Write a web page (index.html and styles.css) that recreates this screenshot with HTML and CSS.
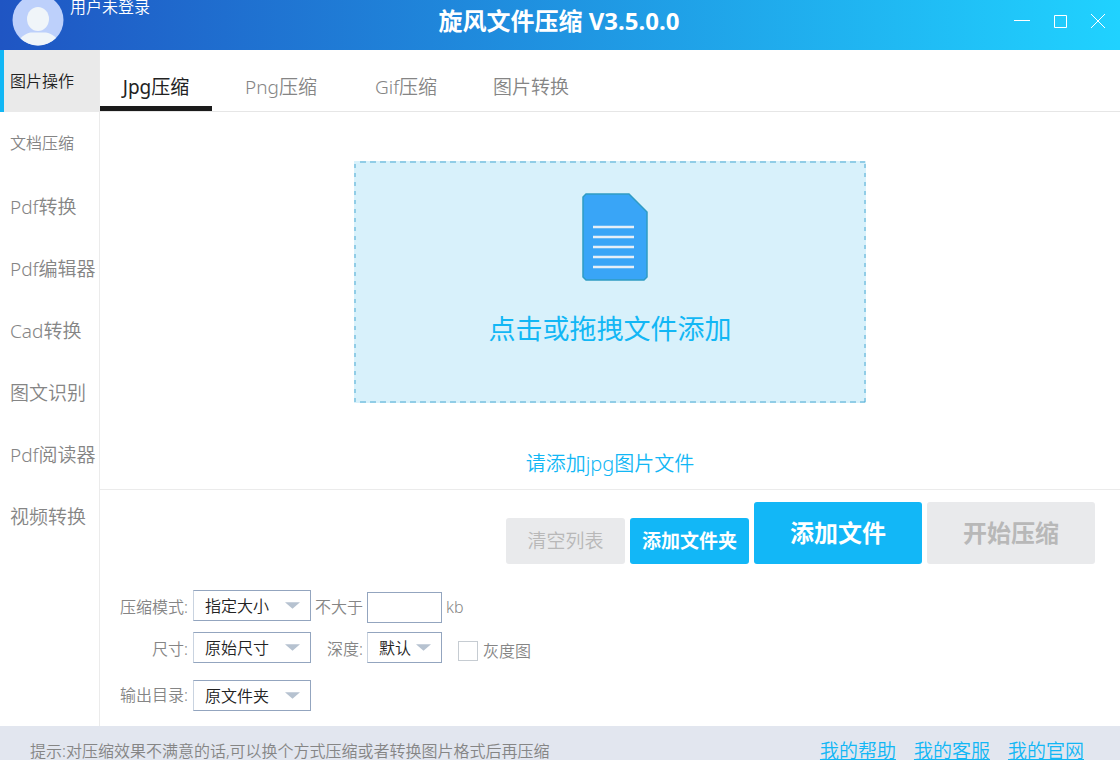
FILE: index.html
```
<!DOCTYPE html>
<html lang="zh-CN">
<head>
<meta charset="utf-8">
<title>旋风文件压缩</title>
<link rel="stylesheet" href="styles.css">
</head>
<body>
<div class="app">
  <header class="titlebar">
    <div class="user">
      <svg class="avatar" viewBox="0 0 52 52" aria-hidden="true">
        <defs><clipPath id="disc"><circle cx="26" cy="26" r="25.5"/></clipPath></defs>
        <circle cx="26" cy="26" r="25.5" fill="#bdd0fb"/>
        <g clip-path="url(#disc)" fill="#f0f5f9">
          <ellipse cx="26" cy="25" rx="11" ry="12"/>
          <path d="M7 46 C12 40 17 38.500 20 38.500 H32 C36 38.500 41 40 46 46 V54 H7 Z"/>
        </g>
      </svg>
      <span class="user-name">用户未登录</span>
    </div>
    <h1 class="title">旋风文件压缩 V3.5.0.0</h1>
    <div class="window-controls">
      <button type="button" class="window-button" aria-label="最小化"><svg viewBox="0 0 16 16"><path d="M0 7.500H16"/></svg></button>
      <button type="button" class="window-button" aria-label="最大化"><svg viewBox="0 0 16 16"><path d="M2.500 2.500H14.500V14.500H2.500Z"/></svg></button>
      <button type="button" class="window-button" aria-label="关闭"><svg viewBox="0 0 16 16"><path d="M1 1L15 15M15 1L1 15"/></svg></button>
    </div>
  </header>

  <div class="body">
    <nav class="sidebar">
      <button type="button" class="side-item side-item-small side-item-active">图片操作</button>
      <button type="button" class="side-item side-item-small">文档压缩</button>
      <button type="button" class="side-item">Pdf转换</button>
      <button type="button" class="side-item">Pdf编辑器</button>
      <button type="button" class="side-item">Cad转换</button>
      <button type="button" class="side-item">图文识别</button>
      <button type="button" class="side-item">Pdf阅读器</button>
      <button type="button" class="side-item">视频转换</button>
    </nav>

    <main class="main">
      <div class="tabs">
        <button type="button" class="tab tab-active">Jpg压缩</button>
        <button type="button" class="tab">Png压缩</button>
        <button type="button" class="tab">Gif压缩</button>
        <button type="button" class="tab">图片转换</button>
      </div>

      <section class="files">
        <button type="button" class="dropzone">
          <svg class="dropzone-frame" aria-hidden="true">
            <g class="dash-row"><line x1="6" y1="1" x2="100%" y2="1"/><line x1="6" y1="100%" x2="100%" y2="100%"/></g>
            <g class="dash-column"><line x1="1" y1="3" x2="1" y2="100%"/><line x1="100%" y1="3" x2="100%" y2="100%"/></g>
          </svg>
          <svg class="file-icon" viewBox="0 0 66 88" aria-hidden="true">
            <path d="M4 1H47L65 19V84L62 87H4L1 84V4Z" fill="#39a5f7" stroke="#2f9cc4" stroke-width="1.500"/>
            <path d="M11 34H52M11 44H52M11 54H52M11 64H52M11 74H52" stroke="#e6eff7" stroke-width="2.500" fill="none"/>
          </svg>
          <span class="dropzone-text">点击或拖拽文件添加</span>
        </button>
        <p class="hint">请添加jpg图片文件</p>
      </section>

      <section class="controls">
        <div class="actions">
          <button type="button" class="action action-muted">清空列表</button>
          <button type="button" class="action action-primary">添加文件夹</button>
          <button type="button" class="action action-large action-primary">添加文件</button>
          <button type="button" class="action action-large action-muted">开始压缩</button>
        </div>
        <form class="options">
          <div class="row">
            <label class="label" for="mode">压缩模式:</label>
            <span class="select"><select id="mode"><option>指定大小</option></select><svg viewBox="0 0 16 8" aria-hidden="true"><path d="M0 0H16L8 7Z"/></svg></span>
            <label class="label label-second" for="limit">不大于</label>
            <input class="limit" id="limit" type="text">
            <label class="unit" for="limit">kb</label>
          </div>
          <div class="row">
            <label class="label" for="size">尺寸:</label>
            <span class="select"><select id="size"><option>原始尺寸</option></select><svg viewBox="0 0 16 8" aria-hidden="true"><path d="M0 0H16L8 7Z"/></svg></span>
            <label class="label label-second" for="depth">深度:</label>
            <span class="select select-short"><select id="depth"><option>默认</option></select><svg viewBox="0 0 16 8" aria-hidden="true"><path d="M0 0H16L8 7Z"/></svg></span>
            <label class="gray"><input type="checkbox" class="checkbox">灰度图</label>
          </div>
          <div class="row row-output">
            <label class="label" for="output">输出目录:</label>
            <span class="select"><select id="output"><option>原文件夹</option></select><svg viewBox="0 0 16 8" aria-hidden="true"><path d="M0 0H16L8 7Z"/></svg></span>
          </div>
        </form>
      </section>
    </main>
  </div>

  <footer class="footer">
    <span class="tip">提示:对压缩效果不满意的话,可以换个方式压缩或者转换图片格式后再压缩</span>
    <div class="links">
      <a href="#help">我的帮助</a>
      <a href="#service">我的客服</a>
      <a href="#site">我的官网</a>
    </div>
  </footer>
</div>
</body>
</html>
```
FILE: styles.css
```
* {
  box-sizing: border-box;
}

body {
  margin: 0;
  font-family: "Noto Sans", "Noto Sans CJK SC", sans-serif;
  font-size: 16px;
  font-weight: 350;
  line-height: 24px;
  color: #858585;
  background: #fff;
}

button,
input,
select {
  margin: 0;
  padding: 0;
  border: 0;
  border-radius: 0;
  background: none;
  font: inherit;
  color: inherit;
}

.app {
  display: flex;
  flex-direction: column;
  height: 100vh;
  overflow: hidden;
}

/* Title bar */

.titlebar {
  display: grid;
  grid-template-columns: 1fr auto 1fr;
  flex: none;
  height: 50px;
  padding: 0 14px 0 12px;
  color: #fff;
  background: linear-gradient(90deg, #1f55c3, #20d2ff);
}

.user {
  display: flex;
  align-items: flex-start;
  gap: 6px;
}

.user-name {
  line-height: 14px;
}

.avatar {
  flex: none;
  width: 52px;
  height: 52px;
  margin-top: -6px;
}

.title {
  margin: 0;
  font-size: 24px;
  font-weight: 700;
  line-height: 42px;
}

.window-controls {
  display: flex;
  justify-content: flex-end;
  gap: 22px;
  height: 42px;
}

.window-button svg {
  display: block;
  width: 16px;
  height: 16px;
  fill: none;
  stroke: #fff;
  stroke-width: 1;
}

/* Body */

.body {
  display: flex;
  flex: 1;
  min-height: 0;
}

.sidebar {
  display: flex;
  flex-direction: column;
  flex: none;
  width: 100px;
  border-right: 1px solid #ebebeb;
}

.side-item {
  flex: none;
  height: 62px;
  padding: 3px 0 0 10px;
  font-size: 19px;
  text-align: left;
  white-space: nowrap;
}

.side-item-small {
  padding-top: 0;
  font-size: 16px;
}

.side-item-active {
  padding-left: 6px;
  border-left: 4px solid #12b7f5;
  background: #eaeaea;
  color: #222;
}

.main {
  display: flex;
  flex-direction: column;
  flex: 1;
  min-width: 0;
}

.tabs {
  display: flex;
  gap: 13px;
  flex: none;
  height: 62px;
  border-bottom: 1px solid #e6e6e6;
}

.tab {
  width: 112px;
  padding-top: 17px;
  border-bottom: 5px solid transparent;
  font-size: 19px;
}

.tab-active {
  border-bottom-color: #1b1b1b;
  font-weight: 400;
  color: #222;
}

.files {
  display: flex;
  flex-direction: column;
  align-items: center;
  flex: 1;
  padding-top: 49px;
  border-bottom: 1px solid #ebebeb;
}

.dropzone {
  position: relative;
  display: flex;
  flex-direction: column;
  align-items: center;
  gap: 28px;
  width: 512px;
  height: 242px;
  padding-top: 32px;
  background: #d8f1fb;
  color: #12b7f5;
}

.dropzone-frame {
  position: absolute;
  inset: 0;
  width: 100%;
  height: 100%;
  padding: 0 1px 1px 0;
  overflow: visible;
  stroke: #4ba9d2;
  stroke-width: 1px;
}

.dash-row {
  stroke-dasharray: 6 4;
}

.dash-column {
  stroke-dasharray: 4 5;
}

.file-icon {
  width: 66px;
  height: 88px;
  margin-left: 9px;
}

.dropzone-text {
  font-size: 27px;
  font-weight: 400;
  line-height: 40px;
}

.hint {
  margin: 46px 0 0;
  font-size: 20px;
  line-height: 30px;
  color: #12b7f5;
}

/* Actions and options */

.controls {
  flex: none;
  height: 236px;
  padding-top: 12px;
}

.actions {
  display: flex;
  justify-content: flex-end;
  align-items: flex-end;
  gap: 5px;
  padding-right: 25px;
}

.action {
  width: 119px;
  height: 46px;
  border-radius: 3px;
  font-size: 19px;
}

.action-large {
  width: 168px;
  height: 62px;
  font-size: 24px;
  font-weight: 700;
}

.action-primary {
  background: #12b7f7;
  color: #fff;
  font-weight: 700;
}

.action-muted {
  background: #e9eaec;
  color: #b8b8b8;
}

.options {
  display: flex;
  flex-direction: column;
  gap: 10px;
  padding-top: 25px;
}

.row {
  display: flex;
  align-items: center;
  height: 32px;
}

.row-output {
  margin-top: 6px;
}

.label {
  width: 88px;
  margin-right: 5px;
  padding-top: 3px;
  text-align: right;
}

.row-output .label {
  padding-top: 0;
}

.label-second {
  width: 52px;
  margin-right: 4px;
}

.select {
  position: relative;
  width: 118px;
  height: 31px;
}

.select select {
  width: 100%;
  height: 100%;
  padding: 2px 0 0 11px;
  border: 1px solid #93a5bf;
  border-left-color: #c9d3e0;
  appearance: none;
  background: #fff;
  color: #222;
}

.select svg {
  position: absolute;
  top: 12px;
  right: 11px;
  width: 15px;
  height: 8px;
  fill: #b6c2d0;
  pointer-events: none;
}

.select-short {
  width: 75px;
}

.limit {
  width: 75px;
  height: 31px;
  margin-top: 4px;
  border: 1px solid #93a5bf;
}

.unit {
  margin-left: 4px;
  padding-top: 4px;
}

.gray {
  display: flex;
  align-items: center;
  gap: 5px;
  margin-left: 16px;
  padding-top: 8px;
}

.checkbox {
  width: 20px;
  height: 20px;
  border: 1px solid #c6ccd2;
  appearance: none;
  background: #fff;
}

.checkbox:checked {
  background: #12b7f5;
}

/* Footer */

.footer {
  display: flex;
  justify-content: space-between;
  flex: none;
  height: 34px;
  padding: 16px 36px 0 30px;
  line-height: 18px;
  background: #e2e6ef;
}

.links {
  display: flex;
  gap: 18px;
  font-size: 19px;
}

.links a {
  color: #12b7f5;
}
```
